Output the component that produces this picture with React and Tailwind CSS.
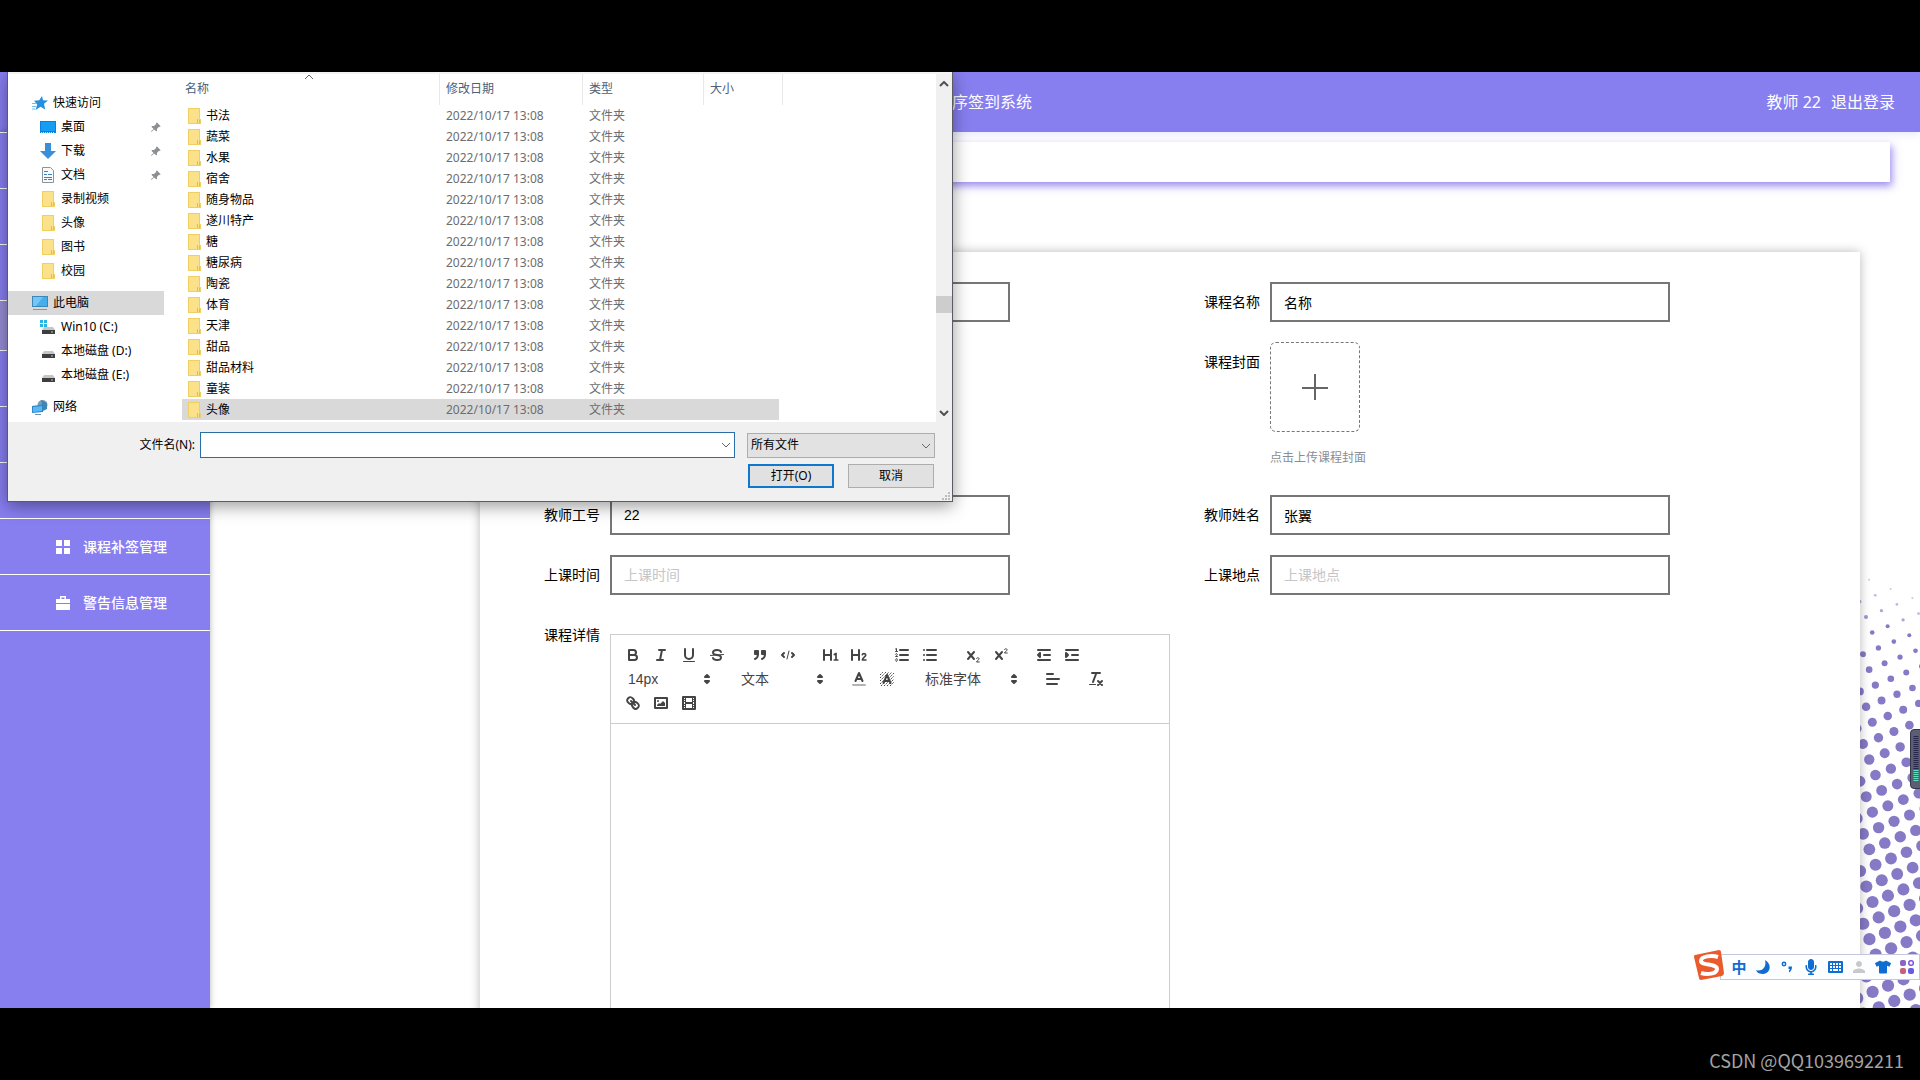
// App.jsx
import React, { useState } from 'react';
import clsx from 'clsx';
import { BsPinAngleFill } from 'react-icons/bs';
import { FaTshirt, FaMicrophone } from 'react-icons/fa';
import { MdPerson } from 'react-icons/md';

const folders = ['书法', '蔬菜', '水果', '宿舍', '随身物品', '遂川特产', '糖', '糖尿病', '陶瓷', '体育', '天津', '甜品', '甜品材料', '童装', '头像'];

/* ---------- file dialog icons ---------- */

const FolderIcon = ({ className }) => (
  <svg viewBox="0 0 13 16" className={clsx('w-[13px] h-4 shrink-0', className)}>
    <path d="M0 0h12v11h1v5H0z" fill="#f0cf62" />
    <path d="M1 1h10v14H1z" fill="#fbe28a" />
    <path d="M9 11h1v4H9zM11 12h1v3h-1z" fill="#e3bb45" />
  </svg>
);

const StarIcon = () => (
  <svg viewBox="0 0 16 16" className="w-4 h-4 shrink-0">
    <path d="M10 1l1 4.300 5 .200-4 3.300 1.200 5.700-4.600-2.700L3.500 15l1.700-5.500L2 5.800l5.200-.500z" fill="#2490df" />
    <path d="M0 8.500h4M0 11.500h4M0 14h3" stroke="#6cbcf2" />
  </svg>
);

const DesktopIcon = () => (
  <svg viewBox="0 0 16 12" className="w-4 h-3 shrink-0">
    <path d="M0 0h16v12H0z" fill="#0d7fd4" />
    <path d="M1 1h14v9H1z" fill="#159cf5" />
    <path d="M1 11.500h14" stroke="#bfe2fb" strokeDasharray="1 1" />
  </svg>
);

const DownloadIcon = () => (
  <svg viewBox="0 0 16 16" className="w-4 h-4 shrink-0">
    <path d="M5 0h6v8h5l-8 8-8-8h5z" fill="#3a8fd9" />
  </svg>
);

const DocumentIcon = () => (
  <svg viewBox="0 0 16 16" className="w-4 h-4 shrink-0" fill="none">
    <path d="M2.500.500h8l3 3v12h-11z" fill="#f7fafc" stroke="#8a949c" />
    <path d="M4 4.500h4M4 7.500h3M8 7.500h4M4 10.500h8M4 12.500h3M8 12.500h4" stroke="#3d7fb8" />
  </svg>
);

const ComputerIcon = () => (
  <svg viewBox="0 0 16 16" className="w-4 h-4 shrink-0">
    <path d="M0 1h16v11H0z" fill="#3c86b8" />
    <path d="M1 2h14v9H1z" fill="#45aeef" />
    <path d="M1 2h10L4 11H1z" fill="#74c6f7" />
    <path d="M1 14.500h14" stroke="#7f98ab" />
  </svg>
);

const DriveIcon = ({ system }) => (
  <svg viewBox="0 0 16 16" className="w-4 h-4 shrink-0">
    <path d="M4 8h9l2 3H2z" fill="#c4c6c8" />
    <path d="M2 11h13v4H2z" fill="#3c3e40" />
    <path d="M11 13h2" stroke="#b8c4b4" />
    {system && <path d="M0 1h3v3H0zM4 1h3v3H4zM0 5h3v3H0zM4 5h3v3H4z" fill="#28b4e0" />}
  </svg>
);

const NetworkIcon = () => (
  <svg viewBox="0 0 16 16" className="w-4 h-4 shrink-0">
    <circle cx="10.500" cy="6" r="5" fill="#7a9fb5" />
    <path d="M9 1l6 3v6l-4 2z" fill="#3f86b4" />
    <path d="M0 7l11-1.500V13L0 14z" fill="#2f86c8" />
    <path d="M1 8l9-1v5l-9 1z" fill="#56b8f5" />
    <path d="M3 15.500h6" stroke="#6f93ad" />
  </svg>
);

const places = [
  { label: '快速访问', icon: <StarIcon />, root: true },
  { label: '桌面', icon: <DesktopIcon />, pinned: true },
  { label: '下载', icon: <DownloadIcon />, pinned: true },
  { label: '文档', icon: <DocumentIcon />, pinned: true },
  { label: '录制视频', icon: <FolderIcon className="ml-[2px] mr-px" /> },
  { label: '头像', icon: <FolderIcon className="ml-[2px] mr-px" /> },
  { label: '图书', icon: <FolderIcon className="ml-[2px] mr-px" /> },
  { label: '校园', icon: <FolderIcon className="ml-[2px] mr-px" /> },
  { label: '此电脑', icon: <ComputerIcon />, root: true, gap: true, active: true },
  { label: 'Win10 (C:)', icon: <DriveIcon system /> },
  { label: '本地磁盘 (D:)', icon: <DriveIcon /> },
  { label: '本地磁盘 (E:)', icon: <DriveIcon /> },
  { label: '网络', icon: <NetworkIcon />, root: true, gap: true },
];

const Chevron = ({ up, bold, className }) => (
  <svg viewBox="0 0 10 6" className={clsx('w-[10px] h-[6px]', className)} fill="none" stroke={bold ? '#505050' : '#666'} strokeWidth={bold ? 2 : 1}>
    <path d={up ? 'M1 5l4-4 4 4' : 'M1 1l4 4 4-4'} />
  </svg>
);

function FileDialog() {
  const [selected, setSelected] = useState(14);
  const [fileName, setFileName] = useState('');

  return (
    <div
      role="dialog"
      className="absolute left-[7px] top-0 z-20 w-[946px] border border-t-0 border-[#5b5b63] bg-[#f0f0f0] text-xs text-black shadow-[0_4px_16px_rgba(0,0,0,0.4)] font-['Noto_Sans','Noto_Sans_CJK_SC',sans-serif]"
    >
      <div className="flex h-[350px] bg-white border-t-2 border-[#f3f3f5]">
        <ul className="w-[156px] pt-[17px] shrink-0">
          {places.map((p, i) => (
            <li key={i} className={clsx(p.gap && 'mt-2')}>
              <button className={clsx('flex items-center w-full h-6 gap-[5px] pr-[3px]', p.root ? 'pl-6' : 'pl-8', p.active && 'bg-[#d9d9d9]')}>
                {p.icon}
                <span className="whitespace-nowrap">{p.label}</span>
                {p.pinned && <BsPinAngleFill className="ml-auto w-[11px] h-[11px] text-[#8c8f93]" />}
              </button>
            </li>
          ))}
        </ul>

        <div className="relative flex-1 ml-[18px]">
          <Chevron up className="absolute left-[122px] top-0" />
          <table className="w-[601px] table-fixed border-separate border-spacing-0 text-left text-[#6d6d6d]">
            <colgroup>
              <col className="w-[258px]" />
              <col className="w-[143px]" />
              <col className="w-[121px]" />
              <col className="w-[79px]" />
            </colgroup>
            <thead>
              <tr className="h-[31px] text-[#4c607a]">
                <th className="font-normal p-0 pb-[2px] pl-[3px] border-r border-[#e8e8e8]">名称</th>
                <th className="font-normal p-0 pb-[2px] pl-[6px] border-r border-[#e8e8e8]">修改日期</th>
                <th className="font-normal p-0 pb-[2px] pl-[6px] border-r border-[#e8e8e8]">类型</th>
                <th className="font-normal p-0 pb-[2px] pl-[6px] border-r border-[#e8e8e8]">大小</th>
              </tr>
            </thead>
            <tbody>
              {folders.map((name, i) => (
                <tr key={name} onClick={() => setSelected(i)} className={clsx('h-[21px] leading-5', i === selected && 'bg-[#d9d9d9]')}>
                  <td className="p-0 pl-[6px] text-black">
                    <span className="flex items-center gap-[5px]"><FolderIcon />{name}</span>
                  </td>
                  <td className="p-0 pl-[6px]">2022/10/17 13:08</td>
                  <td className="p-0 pl-[6px]">文件夹</td>
                  <td className="p-0 border-r-4 border-white" />
                </tr>
              ))}
            </tbody>
          </table>
        </div>

        <div className="flex flex-col items-center w-4 bg-[#f0f0f0] pt-[7px] pb-[6px]">
          <Chevron up bold />
          <div className="w-full h-[17px] mt-[209px] bg-[#cdcdcd]" />
          <Chevron bold className="mt-auto" />
        </div>
      </div>

      <div className="relative h-[79px] pt-[10px] pr-[17px]">
        <div className="flex items-center justify-end">
          <label htmlFor="fileName" className="mr-[5px]">文件名(N):</label>
          <div className="relative w-[535px]">
            <input
              id="fileName"
              className="block w-full h-[26px] px-1 bg-white border border-[#2a6ea8] outline-none"
              value={fileName}
              onChange={(e) => setFileName(e.target.value)}
            />
            <Chevron className="absolute right-1 top-[10px]" />
          </div>
          <div className="relative ml-3 w-[188px]">
            <select aria-label="文件类型" className="block w-full h-[25px] pl-[3px] appearance-none bg-[#e2e2e2] border border-[#adadad]">
              <option>所有文件</option>
            </select>
            <Chevron className="absolute right-1 top-[10px]" />
          </div>
        </div>
        <div className="flex justify-end gap-[14px] mt-[6px] pr-px">
          <button className="w-[86px] h-6 bg-[#e1e1e1] border-2 border-[#1177cc]">打开(O)</button>
          <button className="w-[86px] h-6 bg-[#e1e1e1] border border-[#adadad]">取消</button>
        </div>
        <svg viewBox="0 0 8 8" className="absolute right-[2px] bottom-px w-2 h-2" fill="#bcbcbc">
          <path d="M6 0h2v2H6zM6 3h2v2H6zM6 6h2v2H6zM3 3h2v2H3zM3 6h2v2H3zM0 6h2v2H0z" />
        </svg>
      </div>
    </div>
  );
}

/* ---------- rich text editor ---------- */

const Icon = ({ children }) => (
  <svg viewBox="0 0 18 18" className="w-[18px] h-[18px]" fill="none" stroke="#444" strokeWidth="2" strokeLinecap="round" strokeLinejoin="round">
    {children}
  </svg>
);

const icons = {
  bold: <path d="M5 4h4.500a2.500 2.500 0 0 1 0 5H5zM5 9h5.500a2.500 2.500 0 0 1 0 5H5z" />,
  italic: <path d="M7 4h6M5 14h6M8 14l2-10" />,
  underline: (
    <>
      <path d="M5 3v6a4 4 0 0 0 8 0V3" />
      <path d="M3.500 15.500h11" strokeWidth="1" />
    </>
  ),
  strike: (
    <>
      <path d="M13 6c-.400-1.200-2-2-4-2-2.300 0-4 1.100-4 2.500C5 8 6 8.700 9 9s4 1 4 2.500S11.300 14 9 14c-2 0-3.600-.800-4-2" />
      <path d="M2.500 9.500l13-1" strokeWidth="1" />
    </>
  ),
  quote: (
    <>
      <path d="M4 5h3v3H4zM11 5h3v3h-3z" fill="#444" />
      <path d="M7 8c0 4-3 5-3 5M14 8c0 4-3 5-3 5" />
    </>
  ),
  code: (
    <>
      <path d="M5 7L3 9l2 2M13 7l2 2-2 2" />
      <path d="M10 5L8 13" strokeWidth="1" />
    </>
  ),
  h1: (
    <>
      <path d="M2 4v10M9 4v10M2 9h7" />
      <path d="M12.300 8.500l1.700-1v6M12.300 14h3.500" strokeWidth="1.700" />
    </>
  ),
  h2: (
    <>
      <path d="M2 4v10M9 4v10M2 9h7" />
      <path d="M12.300 8.700c.300-1.500 3.500-1.500 3.500.400 0 1.700-3.300 2.600-3.500 4.900h3.700" strokeWidth="1.600" />
    </>
  ),
  ordered: (
    <>
      <path d="M7 4h8M7 9h8M7 14h8" />
      <path d="M2.500 3l1-.500v3M2.500 5.500h2M4.500 10.500h-2c0-.200 1.850-1.100 1.850-2.200a1 1 0 0 0-1.850-.100M2.500 14.800c.500 1 1.850.600 1.850-.100a.700.700 0 0 0-.600-.700.700.700 0 0 0 .600-.700c0-.800-1.400-1-1.850-.100" strokeWidth="1" />
    </>
  ),
  bullet: <path d="M6 4h9M6 9h9M6 14h9M3 4h0M3 9h0M3 14h0" />,
  sub: (
    <>
      <path d="M4 6l6 7M10 6l-6 7" />
      <path d="M12.500 12.600c.300-1.300 2.600-1.200 2.600.300 0 1-2.300 1.800-2.600 3.100h2.800" strokeWidth="1" />
    </>
  ),
  sup: (
    <>
      <path d="M4 6l6 7M10 6l-6 7" />
      <path d="M12.500 3.600c.300-1.300 2.600-1.200 2.600.300 0 1-2.300 1.800-2.600 3.100h2.800" strokeWidth="1" />
    </>
  ),
  outdent: (
    <>
      <path d="M3 4h12M9 9h6M3 14h12" />
      <path d="M5 7v4L3 9z" fill="#444" />
    </>
  ),
  indent: (
    <>
      <path d="M3 4h12M9 9h6M3 14h12" />
      <path d="M3 7v4l2-2z" fill="#444" />
    </>
  ),
  color: (
    <>
      <path d="M3 15h12" opacity=".4" />
      <path d="M5.500 11L9 3l3.500 8M6.400 9h5.200" />
    </>
  ),
  background: (
    <>
      <path d="M2 5l3-3M2 8l6-6M2 11l9-9M2 14l12-12M3 16L16 3M6 16L16 6M9 16l7-7M12 16l4-4" strokeWidth="1" strokeDasharray="1.500 .900" strokeLinecap="butt" />
      <path d="M5.500 13L9 5l3.500 8M6.400 11h5.200" />
    </>
  ),
  align: <path d="M3 4h6M3 9h12M3 14h10" />,
  clean: (
    <>
      <path d="M5 3h8M6 12l3.350-9M11 11l4 4M15 11l-4 4" />
      <path d="M2.500 14.500h6" strokeWidth="1" />
    </>
  ),
  link: (
    <>
      <path d="M7 7l4 4" />
      <path d="M8.900 4.577a3.476 3.476 0 0 1 .360 4.679A3.476 3.476 0 0 1 4.577 8.900C3.185 7.500 2.035 6.400 4.217 4.217S7.500 3.185 8.900 4.577zM13.423 9.100a3.476 3.476 0 0 0-4.679-.360 3.476 3.476 0 0 0 .360 4.679c1.392 1.392 2.500 2.542 4.679.360S14.815 10.500 13.423 9.100z" />
    </>
  ),
  image: (
    <>
      <path d="M3 4h12v10H3z" />
      <circle cx="6" cy="7" r="1" fill="#444" stroke="none" />
      <path d="M5 12v-1l2-2 1 1 3-3 2 2v3z" fill="#444" stroke="none" />
    </>
  ),
  video: (
    <>
      <path d="M3 3h12v12H3z" />
      <path d="M5 3h1v12H5zM12 3h1v12h-1zM5 8h8v2H5zM3 5h3v1H3zM3 7h3v1H3zM3 10h3v1H3zM3 12h3v1H3zM12 5h3v1h-3zM12 7h3v1h-3zM12 10h3v1h-3zM12 12h3v1h-3z" fill="#444" stroke="none" />
    </>
  ),
};

const ToolGroup = ({ names }) => (
  <span className="flex mr-[15px]">
    {names.map((n) => (
      <button key={n} type="button" aria-label={n} className="flex items-center justify-center w-7 h-6">
        <Icon>{icons[n]}</Icon>
      </button>
    ))}
  </span>
);

const Picker = ({ label, text, className }) => (
  <span className={clsx('relative h-6 mr-[15px]', className)}>
    <select aria-label={label} className="block w-full h-6 pl-[9px] appearance-none bg-transparent text-[#444]">
      <option>{text}</option>
    </select>
    <span className="absolute right-px top-[3px] pointer-events-none">
      <Icon><path d="M7 11l2 2 2-2zM7 7l2-2 2 2z" fill="#444" /></Icon>
    </span>
  </span>
);

const Editor = () => (
  <div className="w-[560px] mt-[19px]">
    <div className="flex flex-wrap p-2 border border-[#ccc] text-sm">
      <ToolGroup names={['bold', 'italic', 'underline', 'strike']} />
      <ToolGroup names={['quote', 'code']} />
      <ToolGroup names={['h1', 'h2']} />
      <ToolGroup names={['ordered', 'bullet']} />
      <ToolGroup names={['sub', 'sup']} />
      <ToolGroup names={['outdent', 'indent']} />
      <Picker label="size" text="14px" className="w-[98px]" />
      <Picker label="header" text="文本" className="w-[98px]" />
      <ToolGroup names={['color', 'background']} />
      <Picker label="font" text="标准字体" className="w-[108px]" />
      <ToolGroup names={['align']} />
      <ToolGroup names={['clean']} />
      <ToolGroup names={['link', 'image', 'video']} />
    </div>
    <div contentEditable aria-label="课程详情" role="textbox" className="h-[400px] px-4 py-3 border border-t-0 border-[#ccc] outline-none" />
  </div>
);

/* ---------- course form ---------- */

const Field = ({ id, label, value, placeholder }) => (
  <div className="flex">
    <label htmlFor={id} className="w-[100px] pr-[10px] text-right leading-10">{label}</label>
    <input
      id={id}
      defaultValue={value}
      placeholder={placeholder}
      className="w-[400px] h-10 px-3 bg-white border-2 border-[#767676] outline-none placeholder:text-[#c4c6ca]"
    />
  </div>
);

const CourseForm = () => (
  <form className="relative flex-1 ml-60 mr-[30px] mt-[70px] p-[30px] bg-white text-sm text-black shadow-[0_0_10px_rgba(0,0,0,0.28)] font-['Liberation_Sans','Noto_Sans_CJK_SC',sans-serif]">
    <div className="grid grid-cols-2 gap-y-5">
      <div className="flex">
        <span className="w-[100px]" />
        <input aria-label="课程编号" className="w-[400px] h-10 px-3 bg-white border-2 border-[#767676] outline-none" />
      </div>
      <Field id="courseName" label="课程名称" value="名称" />

      <div className="col-start-2 flex">
        <label htmlFor="cover" className="w-[100px] pr-[10px] text-right leading-10">课程封面</label>
        <div>
          <button id="cover" type="button" className="flex items-center justify-center w-[90px] h-[90px] rounded-md border border-dashed border-[#767676]">
            <svg viewBox="0 0 26 26" className="w-[26px] h-[26px]" stroke="#666" strokeWidth="2">
              <path d="M13 0v26M0 14h26" />
            </svg>
          </button>
          <p className="mt-4 mb-[7px] text-xs leading-5 text-[#8a8d93]">点击上传课程封面</p>
        </div>
      </div>

      <Field id="teacherNo" label="教师工号" value="22" />
      <Field id="teacherName" label="教师姓名" value="张翼" />
      <Field id="classTime" label="上课时间" placeholder="上课时间" />
      <Field id="classPlace" label="上课地点" placeholder="上课地点" />

      <div className="col-span-2 flex">
        <span className="w-[100px] pr-[10px] text-right leading-10">课程详情</span>
        <Editor />
      </div>
    </div>
  </form>
);

/* ---------- page chrome ---------- */

const GridIcon = () => (
  <svg viewBox="0 0 16 14" className="w-4 h-[14px]" fill="#fff">
    <path d="M1 0h6v6H1zM9 0h6v6H9zM1 8h6v6H1zM9 8h6v6H9z" />
  </svg>
);

const CaseIcon = () => (
  <svg viewBox="0 0 16 14" className="w-4 h-[14px]" fill="#fff">
    <path d="M5 0h6v3h4v4H1V3h4zM6.500 1.500V3h3V1.500zM1 8h14v6H1z" fillRule="evenodd" />
  </svg>
);

const menu = [
  {}, {}, {}, { active: true }, {}, {}, {},
  { label: '课程补签管理', icon: <GridIcon /> },
  { label: '警告信息管理', icon: <CaseIcon /> },
];

const Sidebar = () => (
  <nav className="relative z-10 w-[210px] shrink-0 bg-[#877ef0] shadow-[0_0_6px_rgba(0,0,0,0.3)]">
    <ul className="border-b border-white">
      {menu.map((m, i) => (
        <li key={i} className={clsx('border-t border-white', m.active ? 'h-[50px] bg-[#968dd6]' : 'h-14')}>
          {m.label && (
            <a href="#" className="flex items-center gap-3 h-full pl-[55px] text-sm font-medium text-white">
              {m.icon}
              {m.label}
            </a>
          )}
        </li>
      ))}
    </ul>
  </nav>
);

// halftone corner: square lattice turned about 22 degrees, dots grow downwards
const stops = [[60, 0], [68, 1], [107, 2], [146, 3], [198, 4.3], [249, 5.2], [322, 5.8], [377, 6.1], [600, 6.2]];

const radiusAt = (t) => {
  for (let i = 1; i < stops.length; i++) {
    const [t0, r0] = stops[i - 1];
    const [t1, r1] = stops[i];
    if (t <= t1) return t < t0 ? 0 : r0 + ((r1 - r0) * (t - t0)) / (t1 - t0);
  }
  return 6.2;
};

const dots = [];
for (let a = -10; a < 40; a++) {
  for (let b = -15; b < 15; b++) {
    const x = 6 + a * 6.2 + b * 15.45;
    const y = 109 + a * 15.45 - b * 6.3;
    const r = radiusAt(y - 0.4 * x);
    if (x > -8 && x < 68 && y < 510 && r > 0.6) dots.push({ x, y, r });
  }
}

const Halftone = () => (
  <svg viewBox="0 0 60 500" className="absolute right-0 bottom-0 w-[60px] h-[500px]" fill="#8679c6">
    {dots.map((d, i) => (
      <circle key={i} cx={d.x} cy={d.y} r={d.r} opacity={d.r < 2 ? d.r / 2.5 : 1} />
    ))}
  </svg>
);

const AudioMeter = () => (
  <svg viewBox="0 0 10 60" className="absolute right-0 top-[657px] z-10 w-[10px] h-[60px]">
    <path d="M12 .500H4A3.500 3.500 0 0 0 .500 4v52A3.500 3.500 0 0 0 4 59.500h8z" fill="#5b5d72" stroke="#34364a" />
    <path d="M6 7v33" stroke="#25264a" strokeWidth="5" strokeDasharray="1 1" />
    <path d="M6 41v12" stroke="#5fe0c0" strokeWidth="5" strokeDasharray="1 1" />
  </svg>
);

const ImeBar = () => (
  <div className="absolute right-0 bottom-7 z-10 flex items-center w-[200px] h-[26px] pl-[6px] bg-[#fdfeff] border border-[#c3c9dd] text-[#0f6cd0]">
    <svg viewBox="0 0 32 32" className="absolute -left-7 -top-[6px] w-8 h-8" fill="none">
      <path d="M2 6L26 1q2 0 2 2l3 21q0 2-2 3L8 31q-2 0-2-2L1 8q0-2 1-2z" fill="#ea5a2b" />
      <path d="M25 8C19 6 8 7 8 12c0 5 16 2 16 8 0 5-10 6-16 4" stroke="#fff" strokeWidth="4" />
    </svg>
    <div className="flex [&>*]:flex [&>*]:w-6 [&>*]:h-6 [&>*]:items-center [&>*]:justify-center">
      <button className="text-[15px] font-bold font-['Noto_Sans_CJK_SC',sans-serif]">中</button>
      <button aria-label="moon">
        <svg viewBox="0 0 14 14" className="w-[14px] h-[14px]" fill="currentColor">
          <path d="M9 0c7 4 6 13-2 14-3 0-6-1-7-4 5 2 11-2 9-10z" />
        </svg>
      </button>
      <button aria-label="punctuation">
        <svg viewBox="0 0 14 14" className="w-[14px] h-[14px]" fill="none" stroke="currentColor" strokeWidth="1.500">
          <circle cx="4" cy="4" r="1.700" />
          <path d="M8.500 6.500H12c0 3-1 5-3 6v-2l1-1.500H8.500z" fill="currentColor" stroke="none" />
        </svg>
      </button>
      <button aria-label="voice"><FaMicrophone className="w-4 h-4" /></button>
      <button aria-label="keyboard">
        <svg viewBox="0 0 15 12" className="w-[15px] h-3">
          <rect width="15" height="12" rx="1" fill="currentColor" />
          <path d="M2 3h11M2 6h11" stroke="#fff" strokeWidth="2" strokeDasharray="2 1" />
          <path d="M2 9h2M5 9h5M11 9h2" stroke="#fff" strokeWidth="2" />
        </svg>
      </button>
      <button aria-label="user"><MdPerson className="w-[18px] h-[18px] text-[#c9c9c9]" /></button>
      <button aria-label="skin"><FaTshirt className="w-4 h-4" /></button>
      <button aria-label="toolbox">
        <svg viewBox="0 0 14 14" className="w-[14px] h-[14px]">
          <rect width="6" height="6" rx="2" fill="#8a62c8" />
          <rect x="8.800" y=".800" width="4.500" height="4.500" rx="2" fill="none" stroke="#7a50e0" strokeWidth="1.500" />
          <rect y="8" width="6" height="6" rx="2" fill="#c8607a" />
          <rect x="8" y="8" width="6" height="6" rx="2" fill="#6a5ae0" />
        </svg>
      </button>
    </div>
  </div>
);

export default function App() {
  return (
    <div className="flex flex-col h-screen bg-black font-['Noto_Sans','Noto_Sans_CJK_SC',sans-serif]">
      <div className="h-[72px] shrink-0" />

      <div className="relative flex flex-col flex-1 min-h-0 overflow-hidden bg-white">
        <header className="flex items-center h-[60px] shrink-0 pl-[952px] pr-[25px] bg-[#877ef0] text-base text-white shadow-[0_2px_8px_rgba(135,126,240,0.2)]">
          <h1>序签到系统</h1>
          <span className="ml-auto">教师 22</span>
          <a href="#" className="ml-[10px]">退出登录</a>
        </header>

        <div className="flex flex-1 min-h-0">
          <Sidebar />
          <main className="flex flex-col flex-1 px-[30px] pt-[10px]">
            <Halftone />
            <div className="h-10 shrink-0 bg-white shadow-[2px_4px_8px_rgba(110,90,230,0.7)]" />
            <CourseForm />
          </main>
        </div>

        <FileDialog />
        <AudioMeter />
        <ImeBar />
      </div>

      <footer className="flex items-center justify-end h-[72px] shrink-0 pr-4 pt-8 text-lg text-[#a3a3a3] font-['Noto_Sans_CJK_SC',sans-serif]">
        CSDN @QQ1039692211
      </footer>
    </div>
  );
}
